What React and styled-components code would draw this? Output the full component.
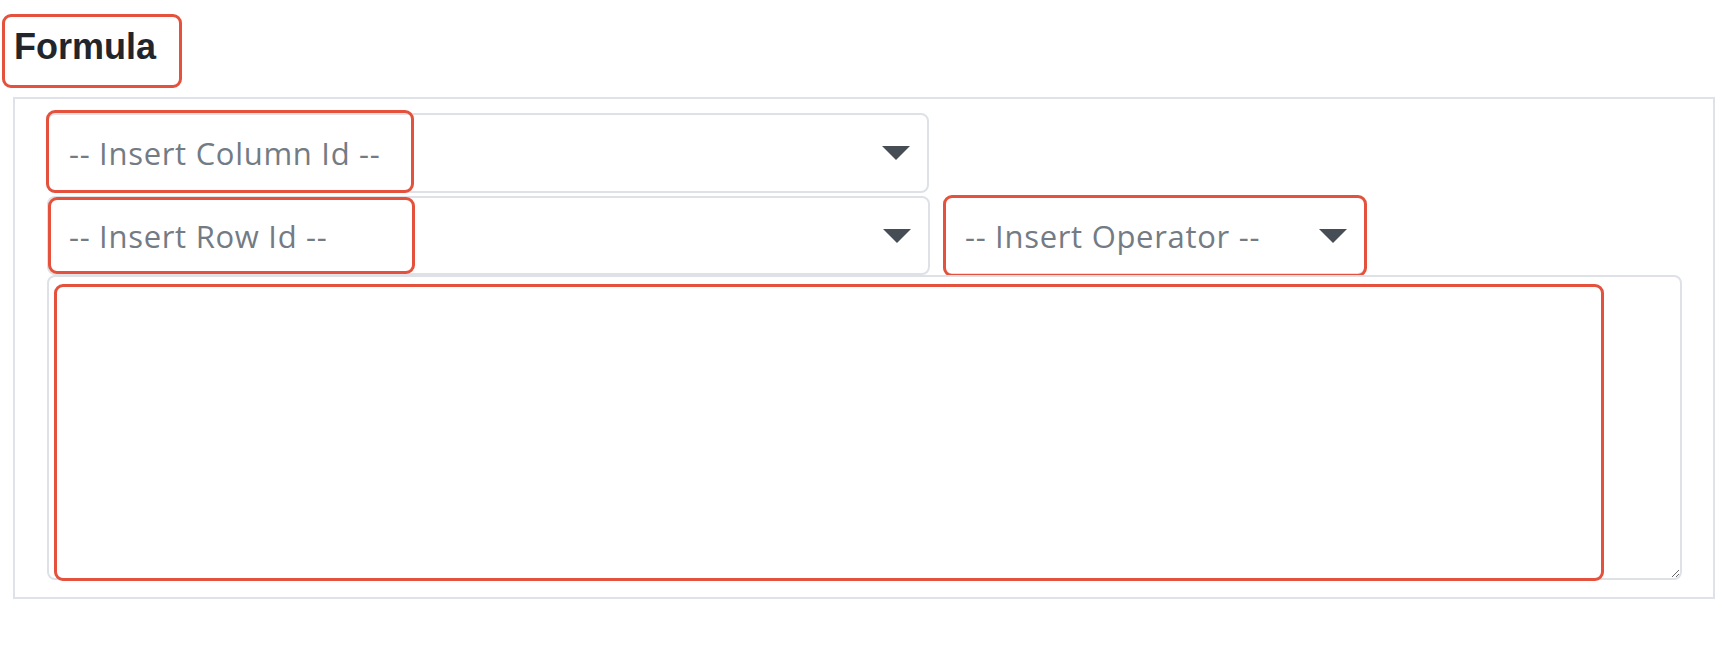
import React from "react";
import styled, { createGlobalStyle } from "styled-components";

const Global = createGlobalStyle`
  html, body { margin: 0; padding: 0; background: #ffffff; }
  body { font-family: "Open Sans", "Lato", sans-serif; }
`;

const Page = styled.div`
  padding: 26px 14px 0 13px;
  width: 1729px;
  box-sizing: border-box;
`;

const Marked = styled.div`
  position: relative;
  display: ${(p) => (p.$inline ? "inline-block" : "block")};
  margin-top: ${(p) => p.$mt || 0}px;
`;

const Mark = styled.span`
  position: absolute;
  top: ${(p) => p.$t}px;
  left: ${(p) => p.$l}px;
  width: ${(p) => p.$w}px;
  height: ${(p) => p.$h}px;
  border: 3px solid #e4513c;
  border-radius: 9px;
  box-sizing: border-box;
  pointer-events: none;
`;

const Label = styled.h2`
  margin: 0 0 30px 1px;
  font-family: "Liberation Sans", Arial, sans-serif;
  font-weight: 700;
  font-size: 36px;
  line-height: 41px;
  color: #22262b;
`;

const Panel = styled.div`
  border: 2px solid #dfe2e8;
  padding: 14px 31px 17px 32px;
  display: flex;
  flex-direction: column;
  gap: 3px;
`;

const Row = styled.div`
  display: flex;
  gap: 13px;
  align-items: flex-start;
`;

const SelectBox = styled.div`
  box-sizing: border-box;
  width: ${(p) => p.$w}px;
  height: ${(p) => p.$h || 80}px;
  border: 2px solid #dee2e6;
  border-radius: 8px;
  background: #fff;
  display: flex;
  align-items: center;
  justify-content: space-between;
  padding: 0 17px 0 20px;
  font-family: "Open Sans", "Lato", sans-serif;
  font-size: 31px;
  letter-spacing: 0.7px;
  color: #737b84;
`;

const Caret = () => (
  <svg width="28" height="14" viewBox="0 0 28 14">
    <path d="M0 0 L28 0 L14 14 Z" fill="#474d54" />
  </svg>
);

const TextArea = styled.textarea`
  display: block;
  box-sizing: border-box;
  width: 1635px;
  height: 305px;
  border: 2px solid #dee2e6;
  border-radius: 8px;
  resize: vertical;
  outline: none;
  font-family: "Open Sans", sans-serif;
  font-size: 31px;
  padding: 10px 20px;
`;

const Select = ({ w, h, text }) => (
  <SelectBox $w={w} $h={h}>
    <span>{text}</span>
    <Caret />
  </SelectBox>
);

export default function App() {
  return (
    <Page>
      <Global />
      <Marked $inline>
        <Label>Formula</Label>
        <Mark $t={-12} $l={-11} $w={180} $h={74} />
      </Marked>
      <Panel>
        <Row>
          <Marked>
            <Select w={882} h={80} text="-- Insert Column Id --" />
            <Mark $t={-3} $l={-1} $w={368} $h={83} />
          </Marked>
        </Row>
        <Row>
          <Marked>
            <Select w={883} h={79} text="-- Insert Row Id --" />
            <Mark $t={1} $l={1} $w={367} $h={77} />
          </Marked>
          <Marked>
            <Select w={423} h={79} text="-- Insert Operator --" />
            <Mark $t={-1} $l={0} $w={424} $h={82} />
          </Marked>
        </Row>
        <Marked $mt={-3}>
          <TextArea />
          <Mark $t={9} $l={7} $w={1550} $h={297} />
        </Marked>
      </Panel>
    </Page>
  );
}
